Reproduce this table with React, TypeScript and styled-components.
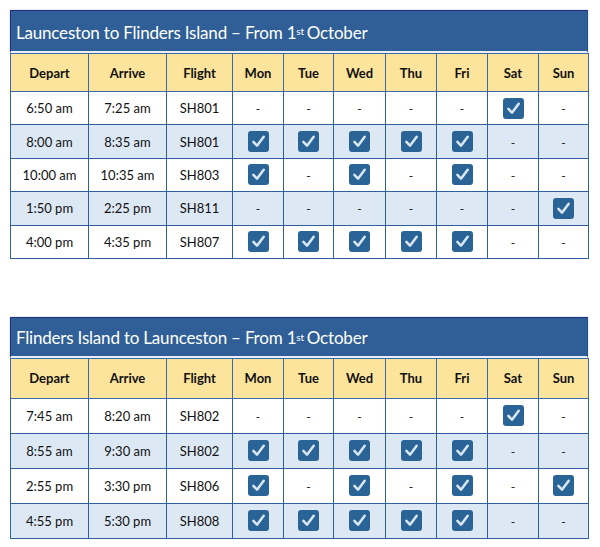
import React from "react";
import styled, { createGlobalStyle } from "styled-components";

const GlobalStyle = createGlobalStyle`
  html, body {
    margin: 0;
    padding: 0;
    background: #ffffff;
    font-family: Lato, "Liberation Sans", sans-serif;
  }
`;

const Page = styled.div`
  width: 600px;
  padding: 10px 0 0 10px;
  box-sizing: border-box;
  display: flex;
  flex-direction: column;
  gap: 58px;
`;

const Section = styled.div`
  width: 578px;
  display: flex;
  flex-direction: column;
`;

interface TitleProps {
  h: number;
}

const TitleBar = styled.div<TitleProps>`
  height: ${(p) => p.h}px;
  box-sizing: border-box;
  background: #2f5f96;
  border-top: 1px solid #1d2f7e;
  border-left: 1px solid #1d2f7e;
  border-right: 1px solid #27508a;
  border-bottom: 2px solid #e9eff8;
  color: #ffffff;
  font-size: 17px;
  letter-spacing: -0.2px;
  display: flex;
  align-items: center;
  padding: 2px 0 0 5px;
  box-shadow: 0 0 2px rgba(60, 90, 160, 0.35);
`;

const Sup = styled.sup`
  font-size: 10px;
  line-height: 0;
  position: relative;
  top: -1px;
  margin-right: 3px;
`;

const Table = styled.table`
  width: 578px;
  border-collapse: collapse;
  table-layout: fixed;
  font-size: 13px;
  color: #111111;
`;

interface RowProps {
  h: number;
  shade?: boolean;
}

const HeadRow = styled.tr<RowProps>`
  height: ${(p) => p.h}px;
  background: #fde49c;
`;

const BodyRow = styled.tr<RowProps>`
  height: ${(p) => p.h}px;
  background: ${(p) => (p.shade ? "#dde8f5" : "#ffffff")};
`;

const HeadCell = styled.th`
  border: 1px solid #3b6aa6;
  font-weight: 700;
  text-align: center;
  padding: 0;
`;

const Cell = styled.td`
  border: 1px solid #2f5f9c;
  text-align: center;
  padding: 0;
`;

const Dash = styled.span`
  font-size: 12px;
`;

const Box = styled.span`
  display: inline-flex;
  width: 21px;
  height: 21px;
  border-radius: 3px;
  background: #2a6496;
  align-items: center;
  justify-content: center;
  vertical-align: middle;
`;

const Check = () => (
  <Box>
    <svg width="15" height="15" viewBox="0 0 15 15">
      <path
        d="M2.4 7.9 L6 11.7 L12.7 2.7"
        fill="none"
        stroke="#d9e7f4"
        strokeWidth="2.5"
        strokeLinecap="round"
        strokeLinejoin="round"
      />
    </svg>
  </Box>
);

const widths = [78, 78, 66, 51, 50, 52, 51, 51, 51, 50];
const heads = ["Depart", "Arrive", "Flight", "Mon", "Tue", "Wed", "Thu", "Fri", "Sat", "Sun"];

type Flight = [string, string, string, string];

const outbound: Flight[] = [
  ["6:50 am", "7:25 am", "SH801", "0000010"],
  ["8:00 am", "8:35 am", "SH801", "1111100"],
  ["10:00 am", "10:35 am", "SH803", "1010100"],
  ["1:50 pm", "2:25 pm", "SH811", "0000001"],
  ["4:00 pm", "4:35 pm", "SH807", "1111100"],
];

const inbound: Flight[] = [
  ["7:45 am", "8:20 am", "SH802", "0000010"],
  ["8:55 am", "9:30 am", "SH802", "1111100"],
  ["2:55 pm", "3:30 pm", "SH806", "1010101"],
  ["4:55 pm", "5:30 pm", "SH808", "1111100"],
];

interface TimetableProps {
  from: string;
  to: string;
  flights: Flight[];
  titleH: number;
  headH: number;
  rowH: number;
}

function Timetable({ from, to, flights, titleH, headH, rowH }: TimetableProps) {
  return (
    <Section>
      <TitleBar h={titleH}>
        {from} to {to} – From 1<Sup>st</Sup>October
      </TitleBar>
      <Table>
        <colgroup>
          {widths.map((w, i) => (
            <col key={i} style={{ width: w }} />
          ))}
        </colgroup>
        <thead>
          <HeadRow h={headH}>
            {heads.map((h) => (
              <HeadCell key={h}>{h}</HeadCell>
            ))}
          </HeadRow>
        </thead>
        <tbody>
          {flights.map((f, i) => (
            <BodyRow key={i} h={rowH} shade={i % 2 === 1}>
              <Cell>{f[0]}</Cell>
              <Cell>{f[1]}</Cell>
              <Cell>{f[2]}</Cell>
              {f[3].split("").map((d, j) => (
                <Cell key={j}>{d === "1" ? <Check /> : <Dash>-</Dash>}</Cell>
              ))}
            </BodyRow>
          ))}
        </tbody>
      </Table>
    </Section>
  );
}

export default function App() {
  return (
    <>
      <GlobalStyle />
      <Page>
        <Timetable
          from="Launceston"
          to="Flinders Island"
          flights={outbound}
          titleH={43}
          headH={38}
          rowH={33.4}
        />
        <Timetable
          from="Flinders Island"
          to="Launceston"
          flights={inbound}
          titleH={41}
          headH={40}
          rowH={35}
        />
      </Page>
    </>
  );
}
